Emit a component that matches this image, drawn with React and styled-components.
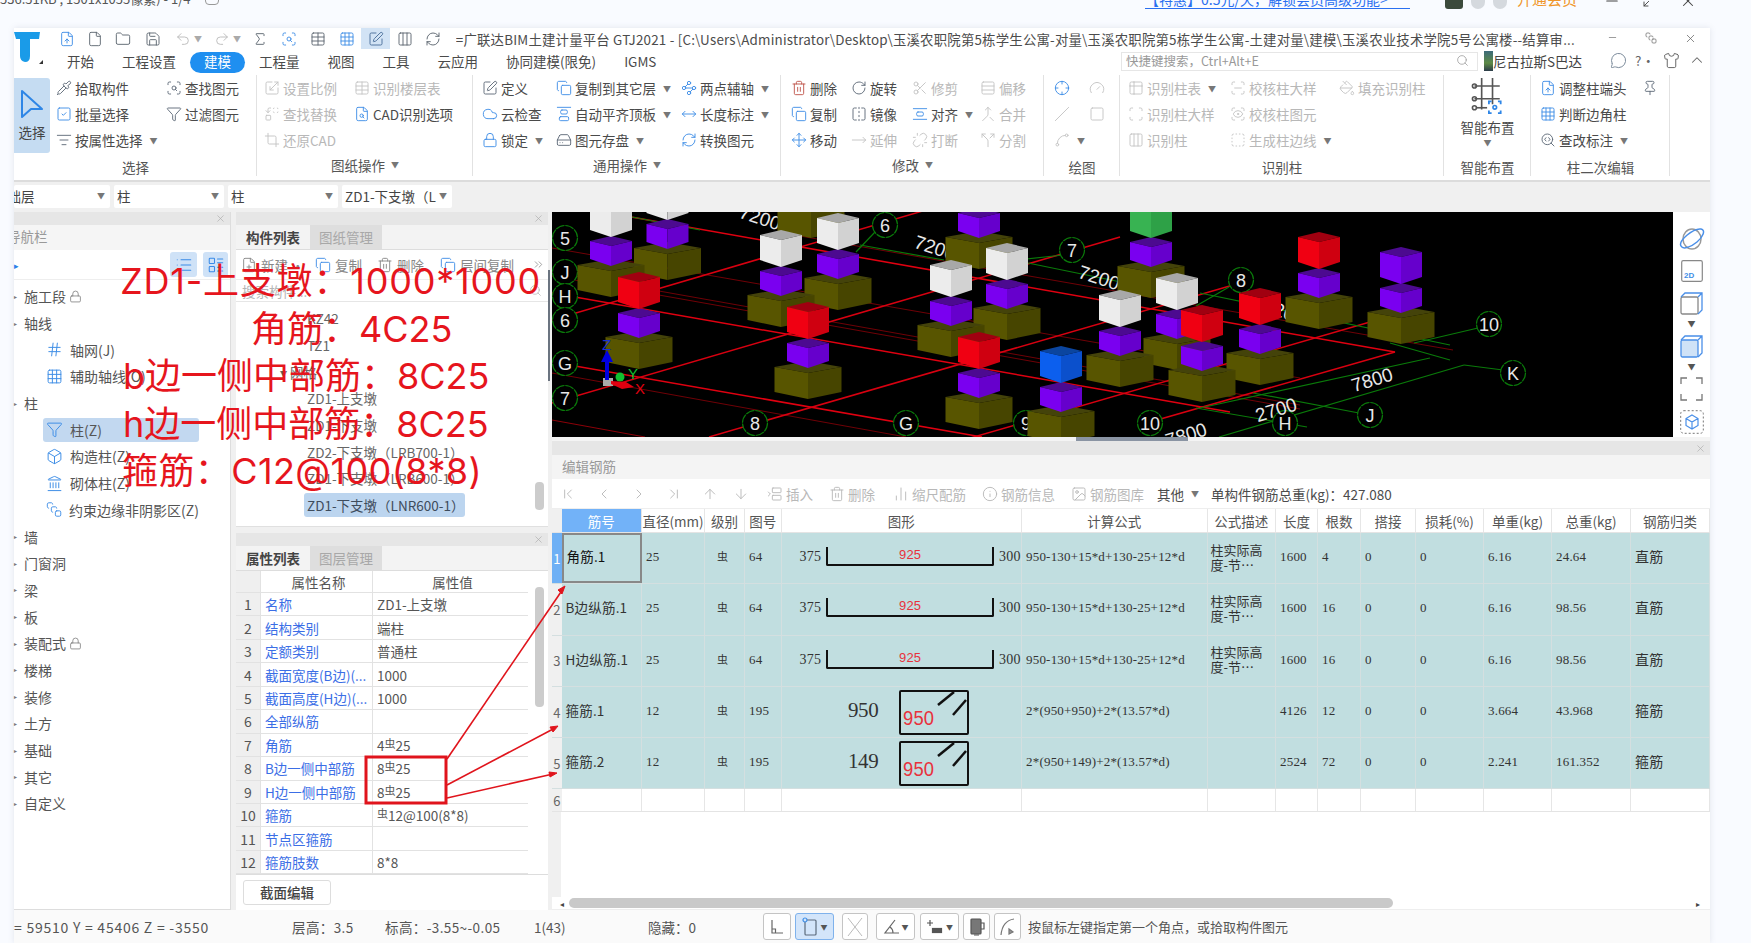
import React from 'react';
import styled, { createGlobalStyle } from 'styled-components';
import {
  Pipette, ScanSearch, SquareCheck, ListFilter, Filter, Scaling, Table, Replace, FileSearch, Crop, SquarePen, Copy,
  Waypoints, Cloud, AlignVerticalJustifyStart, MoveHorizontal, Lock, HardDrive, RefreshCw, Trash2, RotateCw, Scissors,
  Rows3, FlipHorizontal, AlignVerticalSpaceAround, Merge, Move, MoveRight, Unlink, Split, Crosshair, Gauge, Slash, Square,
  Spline, Table2, ScanLine, PaintBucket, Scan, ScanEye, Columns3, SquareDashed, SearchCode, Grid3x3, Hash, File, FileUp,
  Folder, Save, Undo2, Redo2, Sigma, Search, Minus, X, ChevronUp, List, LayoutList, FilePlus, ChevronsRight, ChevronFirst,
  ChevronLeft, ChevronRight, ChevronLast, ArrowUp, ArrowDown, Shirt, MessageCircle, Box, Info, ImageIcon, BetweenHorizontalStart,
  ChartNoAxesColumn, Pin, Landmark, SquareStack, Maximize2
} from 'lucide-react';

const CJK = `"Noto Sans CJK SC", "Noto Sans", sans-serif`;
const GlobalStyle = createGlobalStyle`
  html, body { margin: 0; padding: 0; background: #f9fbff; overflow: hidden; }
  body { font-family: ${CJK}; font-size: 13.5px; color: #4a4a4a; }
  * { box-sizing: border-box; }
`;

const Page = styled.div`width: 1751px; height: 943px; position: relative; overflow: hidden; display: flex; flex-direction: column;`;
const TopStrip = styled.div`height: 28px; flex: none; display: flex; align-items: flex-start; overflow: hidden; font-size: 13px; line-height: 16px; color: #555;`;
const StripFile = styled.div`margin-top: -9px; white-space: nowrap; width: 1145px; flex: none; display: flex; align-items: center;`;
const StripLink = styled.div`margin-top: -9px; width: 265px; flex: none; color: #2a6ff0; border-bottom: 1px solid #2a6ff0; height: 18px; white-space: nowrap; font-size: 14px;`;
const StripThumb = styled.div`width: 18px; height: 9px; flex: none; margin-left: 35px; background: #3c4a3c; border-radius: 0 0 3px 3px;`;
const StripDot = styled.div`width: 14px; height: 9px; flex: none; margin-left: 8px; background: #d5d9de; border-radius: 0 0 7px 7px;`;
const StripVip = styled.div`margin-top: -9px; margin-left: 10px; color: #f0962a; font-size: 15px; white-space: nowrap; width: 76px;`;
const StripCtl = styled.div`margin-top: -8px; width: 38px; flex: none; display: flex; justify-content: center; color: #444;`;
const Sep = styled.i`display: inline-block; width: 14px; height: 14px; border: 1px solid #999; border-radius: 4px; margin-left: 14px; margin-top: -3px;`;

const Win = styled.div`margin-left: 14px; width: 1696px; height: 915px; flex: none; background: #f0f0f0; display: flex; flex-direction: column; box-shadow: 0 0 6px rgba(120,130,150,.18);`;

const Head = styled.div`height: 45px; flex: none; background: #fff; display: flex;`;
const LogoCol = styled.div`width: 39px; flex: none;`;
const HeadMain = styled.div`flex: 1; display: flex; flex-direction: column; min-width: 0;`;
const TitleRow = styled.div`height: 24px; padding-bottom: 3px; display: flex; align-items: center;`;
const Quick = styled.div`width: ${p => p.$w || 28.8}px; height: 21px; flex: none; display: flex; align-items: center; justify-content: ${p => p.$left ? 'flex-start' : 'center'}; padding-left: ${p => p.$left || 0}px; background: ${p => p.$on ? '#d2e3f5' : 'transparent'}; color: ${p => p.$c || '#5d6670'};`;
const QCaret = styled.span`font-size: 8px; color: #aaa; margin-left: 3px;`;
const TitleText = styled.div`margin-left: 8px; width: 1127px; white-space: nowrap; overflow: hidden; font-size: 13.4px; letter-spacing: .2px; color: #4c4c4c;`;
const WinBtns = styled.div`display: flex; margin-left: 10px; color: #666;`;
const WinBtn = styled.div`width: 39px; display: flex; justify-content: center;`;
const TabRow = styled.div`height: 21px; display: flex; align-items: center;`;
const Tab = styled.div`height: 21px; line-height: 18px; padding: 0 14px; flex: none; white-space: nowrap; border-radius: 11px; background: ${p => p.$on ? '#1f8ff0' : 'transparent'}; color: ${p => p.$on ? '#fff' : '#4a4a4a'};`;
const SearchBox = styled.div`position: absolute; left: 1121px; top: 52px; width: 357px; height: 19px; border: 1px solid #e6e6e6; display: flex; align-items: center; justify-content: space-between; padding: 0 8px 2px 4px; color: #999; font-size: 12.5px; background: #fff;`;
const UserBlock = styled.div`position: absolute; left: 1484px; top: 50px; display: flex; align-items: center; height: 21px; color: #444; white-space: nowrap;`;
const Avatar = styled.div`width: 9px; height: 20px; background: linear-gradient(#3d6b7a, #5d8a45 60%, #2c3c4a);`;
const HeadIcons = styled.div`position: absolute; left: 1610px; top: 50px; display: flex; align-items: center; gap: 8px; color: #666;`;

const Ribbon = styled.div`height: 109px; flex: none; background: #fff; border-bottom: 2px solid #dcdcdc; display: flex;`;
const Group = styled.div`width: ${p => p.$w}px; flex: none; padding-left: ${p => p.$pad || 0}px; display: flex; flex-direction: column; position: relative; &::after { content: ''; position: absolute; right: 0; top: 2px; bottom: 4px; width: 1px; background: #e2e2e2; }`;
const Tools = styled.div`display: grid; grid-template-columns: ${p => p.$cols}; grid-template-rows: repeat(3, 26px); padding-top: 2px; height: 81px; flex: none;`;
const Label = styled.div`flex: 1; margin-left: ${p => -(p.$pad || 0)}px; display: flex; align-items: center; justify-content: center; padding-bottom: ${p => p.$up ? 5 : 0}px; color: #555; font-size: 13.5px; gap: 6px;`;
const Caret = styled.span`font-size: 8px; color: #777; margin-left: ${p => p.$ml ?? 4}px;`;
const Tool = styled.div`display: flex; align-items: center; gap: 3px; white-space: nowrap; color: ${p => p.$off ? '#b8b8b8' : '#4a4a4a'};`;
const SelectBtn = styled.div`grid-row: 1 / 4; width: 36px; height: 75px; margin-top: 3px; background: #c5dcf2; border-radius: 0 3px 3px 0; display: flex; flex-direction: column; align-items: center; justify-content: center; gap: 3px; color: #444; font-size: 13.5px;`;
const BigTool = styled.div`display: flex; flex-direction: column; align-items: center; padding-top: 4px; height: 81px; color: #4a4a4a; line-height: 20px;`;
const BigName = styled.span`margin-top: 2px;`;
const BigCaret = styled.span`font-size: 8px; color: #777; line-height: 10px; margin-top: 1px;`;

const Combos = styled.div`height: 28px; flex: none; display: flex; gap: 4px; padding-top: 3px;`;
const Combo = styled.div`width: ${p => p.$w}px; height: 23px; background: #fff; border-radius: 2px; display: flex; align-items: center; justify-content: space-between; padding: 0 5px 2px ${p => p.$cut ? 0 : 3}px; white-space: nowrap; overflow: hidden; color: #444;`;
const ComboCut = styled.span`margin-left: -20px;`;

const Main = styled.div`flex: 1; min-height: 0; display: flex; padding-top: 2px;`;
const LeftPanel = styled.div`width: 217px; flex: none; background: #fff; display: flex; flex-direction: column; border-right: 1px solid #ddd; border-bottom: 1px solid #ddd;`;
const GrayHead = styled.div`height: ${p => p.$h || 13}px; flex: none; background: #e6e6e6; display: flex; justify-content: flex-end; align-items: center; padding-right: 4px; color: #aaa;`;
const NavTitle = styled.div`height: 25px; flex: none; background: #f5f5f5; padding-bottom: 3px; display: flex; align-items: center; color: #999; overflow: hidden;`;
const NavText = styled.span`margin-left: -7px; white-space: nowrap;`;
const NavBar = styled.div`height: 30px; flex: none; display: flex; align-items: center; gap: 6px; justify-content: flex-end; padding-right: 2px; border-bottom: 1px solid #eee; position: relative;`;
const NavMark = styled.span`position: absolute; left: 0; top: 9px; color: #2a80e8; font-size: 9px;`;
const NavBtn = styled.div`width: ${p => p.$w}px; height: 25px; background: #cfe2f7; border-radius: 3px; display: flex; align-items: center; justify-content: center; color: #3a8be8;`;
const Tree = styled.div`padding-top: 3px; flex: 1;`;
const TreeRow = styled.div`height: 26.7px; display: flex; align-items: center; padding-left: ${p => p.$child ? 32 : 0}px; font-size: 14px; color: #555; position: relative;`;
const Twist = styled.span`width: 10px; flex: none; font-size: 6px; color: #777;`;
const TreeName = styled.span`white-space: nowrap; margin-left: ${p => p.$child ? 7 : 0}px;`;
const TreeHi = styled.div`display: flex; align-items: center; width: 156px; margin-left: -3px; padding-left: 3px; height: 24px; border-radius: 3px; background: ${p => p.$on ? '#c2d8f0' : 'transparent'};`;
const LockIcon = styled.span`margin-left: 3px; display: inline-flex; color: #777;`;

const Mid = styled.div`width: 312px; margin-left: 5px; flex: none; display: flex; flex-direction: column; gap: 6px;`;
const MidTop = styled.div`height: 315px; flex: none; background: #fff; display: flex; flex-direction: column; border-bottom: 1px solid #e0e0e0;`;
const MidBot = styled.div`flex: 1; background: #fff; display: flex; flex-direction: column;`;
const MidTabs = styled.div`height: 25px; flex: none; background: #f3f3f3; display: flex; border-bottom: 1px solid #ddd; padding-left: 1px;`;
const MidTab = styled.div`width: 72px; text-align: center; line-height: 24px; font-weight: ${p => p.$on ? 700 : 400}; color: ${p => p.$on ? '#444' : '#a8a8a8'}; background: ${p => p.$on ? '#f3f3f3' : '#dedede'}; margin-right: 1px;`;
const MidTools = styled.div`height: 29px; flex: none; display: flex; align-items: center; color: #888; position: relative; padding-left: 5px;`;
const MidTool = styled.div`display: flex; align-items: center; gap: 4px; width: ${p => p.$w}px; flex: none; white-space: nowrap; overflow: hidden;`;
const MidSearch = styled.div`height: 23px; flex: none; border-top: 1px solid #eee; border-bottom: 1px solid #e6e6e6; display: flex; align-items: center; justify-content: space-between; padding: 0 6px; color: #b5b5b5;`;
const MidList = styled.div`flex: 1; position: relative; display: flex; flex-direction: column; padding-top: 3px;`;
const ListRow = styled.div`height: 26.7px; flex: none; display: flex; align-items: center; padding-left: ${p => p.$ind || 71}px; color: #666; font-size: 13.5px; white-space: nowrap;`;
const ListSel = styled.span`background: #bcd5ef; border-radius: 3px; padding: 0 3px; margin-left: -3px; line-height: 24px; width: 161px; display: block; color: #3e4c5c;`;
const Thumb = styled.div`position: absolute; right: ${p => p.$r}px; top: ${p => p.$t}px; width: 9px; height: ${p => p.$h}px; background: #ccc; border-radius: 4px;`;

const PropWrap = styled.div`position: relative; flex: none; padding-right: 20px; border-bottom: 1px solid #ddd;`;
const PropRow = styled.div`display: grid; grid-template-columns: 25px 112px 1fr; height: ${p => p.$h || 23.45}px; border-bottom: 1px solid #e2e2e2;`;
const PropNum = styled.div`background: #efefef; border-right: 1px solid #e2e2e2; display: flex; align-items: center; justify-content: center; font-size: 14px; color: #555;`;
const PropName = styled.div`border-right: 1px solid #e2e2e2; padding-left: 4px; display: flex; align-items: center; white-space: nowrap; overflow: hidden; color: ${p => p.$head ? '#555' : '#3b6ee6'}; justify-content: ${p => p.$head ? 'center' : 'flex-start'};`;
const PropVal = styled.div`padding-left: 4px; display: flex; align-items: center; white-space: nowrap; color: #555; justify-content: ${p => p.$head ? 'center' : 'flex-start'};`;
const Sym = styled.span`font-size: 11px; position: relative; top: -2px;`;
const PropFoot = styled.div`flex: 1; padding: 5px 0 0 7px;`;
const EditBtn = styled.div`width: 88px; height: 25px; border: 1px solid #ddd; border-radius: 3px; text-align: center; line-height: 22px; color: #444; font-weight: 500;`;

const Gutter = styled.div`width: 4px; flex: none; padding-top: 58px;`;
const GutterMark = styled.div`width: 2px; height: 111px; background: #6b7480;`;

const Right = styled.div`flex: 1; min-width: 0; display: flex; flex-direction: column;`;
const ViewRow = styled.div`height: 225px; flex: none; display: flex;`;
const Canvas = styled.svg`width: 1121px; height: 225px; display: block; flex: none; background: #000;`;
const SideBar = styled.div`flex: 1; background: #fff; display: flex; flex-direction: column; align-items: center; padding-top: 14px;`;
const SideIcon = styled.div`height: ${p => p.$h}px; display: flex; align-items: center; justify-content: center; color: #4a8fe8; flex: none;`;
const SideArrow = styled.div`height: ${p => p.$h || 14}px; flex: none; font-size: 8px; line-height: ${p => p.$h || 14}px; color: #555;`;
const ScrollStrip = styled.div`height: 4px; flex: none; background: #f4f4f4; padding-left: 524px;`;
const ScrollGrip = styled.div`width: 112px; height: 4px; background: #8a94a3;`;

const Rebar = styled.div`flex: 1; min-height: 0; display: flex; flex-direction: column; background: #fff;`;
const RebarTitle = styled.div`height: 24px; flex: none; background: #f4f4f4; display: flex; align-items: center; padding: 0 0 3px 10px; color: #999; font-size: 13.5px;`;
const RebarTools = styled.div`height: 30px; flex: none; display: flex; align-items: center; color: #bbb; border-bottom: 1px solid #eee;`;
const RTool = styled.div`display: flex; align-items: center; gap: 3px; margin-left: ${p => p.$ml}px; color: ${p => p.$dark ? '#4c4c4c' : '#b8b8b8'}; white-space: nowrap; flex: none;`;
const Grid = styled.div`display: grid; grid-template-columns: 9.5px 80.5px 63px 40px 36.5px 240.5px 185.5px 68.5px 42px 43px 55px 68px 68px 79px 1fr; height: ${p => p.$h}px; flex: none; background: ${p => p.$bg || '#fff'}; border-bottom: 1px solid ${p => p.$line || '#e4e4e4'};`;
const HeadCell = styled.div`display: flex; align-items: center; justify-content: center; white-space: nowrap; border-right: 1px solid #e6e6e6; color: ${p => p.$on ? '#fff' : '#555'}; background: ${p => p.$on ? '#72b2f8' : 'transparent'}; overflow: hidden;`;
const Gut = styled.div`background: ${p => p.$on ? '#6eb0f5' : '#f0f0f0'}; color: ${p => p.$on ? '#fff' : '#666'}; display: flex; align-items: center; justify-content: center; font-size: 13px; overflow: visible; white-space: nowrap;`;
const Cell = styled.div`display: flex; align-items: center; border-right: 1px solid #d4dfe0; padding: 0 0 3px ${p => p.$pad ?? 4}px; font-family: "Liberation Serif", "Noto Sans CJK SC", serif; font-size: 13px; color: #333; white-space: nowrap; overflow: hidden; line-height: 15px; letter-spacing: .2px; position: relative; ${p => p.$sel && 'border: 2px solid #888; font-size: 14px; color: #111; padding-left: 3px;'}`;
const CellWrap = styled(Cell)`white-space: normal; font-family: ${CJK}; font-size: 13px; letter-spacing: 0; padding-left: 3px; width: 100%; color: #333;`;
const Cjk = styled.span`font-family: ${CJK}; font-size: ${p => p.$s || 13.5}px;`;

const BarShape = styled.div`flex: 1; display: flex; align-items: center; font-family: "Liberation Serif", "Noto Sans CJK SC", serif; padding-left: 18px; font-size: 14px; color: #333;`;
const BarLine = styled.div`width: 168px; height: 19px; margin: 0 5px 0 5px; border: solid #111; border-width: 0 2px 2px 2px; border-radius: 0 0 2px 2px; text-align: center; color: #e8323c; line-height: 16px; font-family: "Liberation Sans", sans-serif; font-size: 13px;`;
const HookLabel = styled.div`width: 117px; flex: none; padding-right: 20px; text-align: right; font-size: 21px; font-family: "Liberation Serif", serif; color: #333; letter-spacing: -.3px;`;
const HookBox = styled.div`width: 70px; height: 45px; border: 2.5px solid #111; border-radius: 2px; position: relative; flex: none; margin-top: 3px;`;
const HookText = styled.span`position: absolute; left: 2px; top: 15px; color: #e8323c; font-family: "Liberation Sans", sans-serif; font-size: 20px; line-height: 22px; transform: scaleX(.92); transform-origin: left;`;
const HookSvg = styled.svg`position: absolute; left: 30px; top: -1px; width: 36px; height: 26px;`;

const Filler = styled.div`flex: 1; border-left: 9.5px solid #f0f0f0;`;
const HScroll = styled.div`height: 13px; flex: none; display: flex; align-items: center; padding: 0 8px; gap: 5px; color: #444; border-bottom: 1px solid #eee;`;
const HThumb = styled.div`width: 824px; height: 10px; background: #c9c9c9; border-radius: 5px; flex: none;`;
const HArrow = styled.span`font-size: 8px; margin-left: ${p => p.$ml || 0}px;`;

const Status = styled.div`height: 33px; flex: none; background: #fafafa; display: flex; align-items: center; font-size: 14px; color: #555; white-space: nowrap;`;
const StatusText = styled.span`width: ${p => p.$w}px; flex: none; font-size: ${p => p.$s || 13.5}px; letter-spacing: ${p => p.$ls || 0}px;`;
const SBtn = styled.div`width: ${p => p.$w}px; height: 27px; margin-right: ${p => p.$mr ?? 4}px; border: 1px solid ${p => p.$on ? '#7fb2ec' : '#c4c4c4'}; background: ${p => p.$on ? '#d3e5fa' : '#fff'}; border-radius: 3px; display: flex; align-items: center; justify-content: center; flex: none; gap: 2px;`;
const SCaret = styled.span`font-size: 7px; color: #555;`;

const Overlay = styled.svg`position: absolute; left: 0; top: 0; width: 1751px; height: 943px; pointer-events: none;`;
const RedNote = styled.div`position: absolute; left: 120px; top: 258px; color: #e6151d; font-size: 36px; line-height: 47.5px; white-space: nowrap; pointer-events: none; font-family: Inter, ${CJK};`;
const NoteLine = styled.div`padding-left: ${p => p.$ind || 0}px; letter-spacing: ${p => p.$ls || 0}px;`;

const I = (C, p = {}) => <C size={p.s || 16} strokeWidth={p.w || 1.4} color={p.c || 'currentColor'} />;
const BLUE = '#3f8ee6';

const Logo = () => (
  <svg width="39" height="38" viewBox="0 0 39 38">
    <path d="M0 4 H26 L25 11 H16 V28 Q16 34 11 34 Q6 33 6 28 V11 H2 Z" fill="#1a9be8" />
    <path d="M25 36 l4 -4 v4 z" fill="#333" />
  </svg>
);

const ToolItem = ({ icon, label, off, caret, c }) => (
  <Tool $off={!!off}>
    {I(icon, { c: off ? '#c4c4c4' : c || '#5f6b78' })}
    {label ? <span>{label}</span> : null}
    {caret ? <Caret>▼</Caret> : null}
  </Tool>
);

const ribbon = [
  { w: 243, cols: '42px 110px 1fr', label: '选择', sel: true, items: [
    [Pipette, '拾取构件'], [ScanSearch, '查找图元'], [SquareCheck, '批量选择', 0, 0, BLUE], [Filter, '过滤图元'], [ListFilter, '按属性选择', 0, 1]] },
  { w: 216, pad: 7, cols: '90px 1fr', label: '图纸操作', labelCaret: true, items: [
    [Scaling, '设置比例', 1], [Table, '识别楼层表', 1], [Replace, '查找替换', 1], [FileSearch, 'CAD识别选项', 0, 0, BLUE], [Crop, '还原CAD', 1]] },
  { w: 308, pad: 9, cols: '74px 125px 1fr', label: '通用操作', labelCaret: true, items: [
    [SquarePen, '定义'], [Copy, '复制到其它层', 0, 1, BLUE], [Waypoints, '两点辅轴', 0, 1, BLUE],
    [Cloud, '云检查', 0, 0, BLUE], [AlignVerticalJustifyStart, '自动平齐顶板', 0, 1, BLUE], [MoveHorizontal, '长度标注', 0, 1, BLUE],
    [Lock, '锁定', 0, 1, BLUE], [HardDrive, '图元存盘', 0, 1], [RefreshCw, '转换图元', 0, 0, BLUE]] },
  { w: 263, pad: 10, cols: '60px 61px 68px 1fr', label: '修改', labelCaret: true, items: [
    [Trash2, '删除', 0, 0, '#c0564c'], [RotateCw, '旋转'], [Scissors, '修剪', 1], [Rows3, '偏移', 1],
    [Copy, '复制', 0, 0, BLUE], [FlipHorizontal, '镜像'], [AlignVerticalSpaceAround, '对齐', 0, 1, BLUE], [Merge, '合并', 1],
    [Move, '移动', 0, 0, BLUE], [MoveRight, '延伸', 1], [Unlink, '打断', 1], [Split, '分割', 1]] },
  { w: 76, pad: 10, cols: '35px 1fr', label: '绘图', items: [
    [Crosshair, '', 0, 0, BLUE], [Gauge, '', 1], [Slash, '', 1], [Square, '', 1], [Spline, '', 1, 1]] },
  { w: 324, pad: 8, cols: '102px 109px 1fr', label: '识别柱', items: [
    [Table2, '识别柱表', 1, 1], [ScanLine, '校核柱大样', 1], [PaintBucket, '填充识别柱', 1],
    [Scan, '识别柱大样', 1], [ScanEye, '校核柱图元', 1], null,
    [Columns3, '识别柱', 1], [SquareDashed, '生成柱边线', 1, 1]] },
  { w: 87, label: '智能布置', big: true },
  { w: 139, pad: 9, cols: '102px 1fr', label: '柱二次编辑', items: [
    [FileUp, '调整柱端头', 0, 0, BLUE], [Pin, ''], [Grid3x3, '判断边角柱', 0, 0, BLUE], null, [SearchCode, '查改标注', 0, 1]] },
];

const treeData = [
  { t: '施工段', lock: 1 }, { t: '轴线' }, { t: '轴网(J)', c: 1, i: Hash }, { t: '辅助轴线(O)', c: 1, i: Grid3x3 }, { t: '柱' },
  { t: '柱(Z)', c: 1, i: Filter, on: 1 }, { t: '构造柱(Z)', c: 1, i: Box }, { t: '砌体柱(Z)', c: 1, i: Landmark },
  { t: '约束边缘非阴影区(Z)', c: 1, i: SquareStack }, { t: '墙' }, { t: '门窗洞' }, { t: '梁' }, { t: '板' },
  { t: '装配式', lock: 1 }, { t: '楼梯' }, { t: '装修' }, { t: '土方' }, { t: '基础' }, { t: '其它' }, { t: '自定义' },
];

const props = [
  ['名称', 'ZD1-上支墩'], ['结构类别', '端柱'], ['定额类别', '普通柱'], ['截面宽度(B边)(...', '1000'], ['截面高度(H边)(...', '1000'],
  ['全部纵筋', ''], ['角筋', <>4<Sym>虫</Sym>25</>], ['B边一侧中部筋', <>8<Sym>虫</Sym>25</>], ['H边一侧中部筋', <>8<Sym>虫</Sym>25</>],
  ['箍筋', <><Sym>虫</Sym>12@100(8*8)</>], ['节点区箍筋', ''], ['箍筋肢数', '8*8'],
];

const rebarRows = [
  { name: '角筋.1', d: 25, no: 64, kind: 'bar', f: '950-130+15*d+130-25+12*d', desc: '柱实际高度-节…', len: 1600, n: 4, w: '6.16', tot: '24.64', cat: '直筋', sel: 1 },
  { name: 'B边纵筋.1', d: 25, no: 64, kind: 'bar', f: '950-130+15*d+130-25+12*d', desc: '柱实际高度-节…', len: 1600, n: 16, w: '6.16', tot: '98.56', cat: '直筋' },
  { name: 'H边纵筋.1', d: 25, no: 64, kind: 'bar', f: '950-130+15*d+130-25+12*d', desc: '柱实际高度-节…', len: 1600, n: 16, w: '6.16', tot: '98.56', cat: '直筋' },
  { name: '箍筋.1', d: 12, no: 195, kind: 'hook', a: 950, f: '2*(950+950)+2*(13.57*d)', desc: '', len: 4126, n: 12, w: '3.664', tot: '43.968', cat: '箍筋' },
  { name: '箍筋.2', d: 12, no: 195, kind: 'hook', a: 149, f: '2*(950+149)+2*(13.57*d)', desc: '', len: 2524, n: 72, w: '2.241', tot: '161.352', cat: '箍筋' },
];

const heads = ['筋号', '直径(mm)', '级别', '图号', '图形', '计算公式', '公式描述', '长度', '根数', '搭接', '损耗(%)', '单重(kg)', '总重(kg)', '钢筋归类'];

/* ---------- 3D canvas ---------- */
const PAL = {
  white: ['#a8a8a8', '#ececec', '#d2d2d2'],
  red: ['#a00010', '#f00012', '#cf0010'],
  purple: ['#4c0a90', '#7a00f0', '#6600cc'],
  olive: ['#44430a', '#585500', '#474500'],
  blue: ['#0b459f', '#0c5fee', '#0b50cc'],
  green: ['#1d8a39', '#38b352', '#2ea147'],
};
const Cube = ({ cx, y, w, h, dh, col }) => {
  const [t, l, r] = PAL[col];
  const hw = w / 2, s = dh, f = dh * 2;
  return (
    <g>
      <polygon points={`${cx},${y} ${cx + hw},${y + s} ${cx},${y + f} ${cx - hw},${y + s}`} fill={t} />
      <polygon points={`${cx - hw},${y + s} ${cx},${y + f} ${cx},${y + h} ${cx - hw},${y + h - 7}`} fill={l} />
      <polygon points={`${cx + hw},${y + s} ${cx},${y + f} ${cx},${y + h} ${cx + hw},${y + h - 7}`} fill={r} />
    </g>
  );
};
const Pier = ({ cx, y, col }) => (
  <g>
    <Cube cx={cx} y={y + 59} w={67} h={38} dh={6} col="olive" />
    <Cube cx={cx} y={y + 36} w={42} h={30} dh={5} col="purple" />
    {col !== 'none' && <Cube cx={cx} y={y} w={42} h={37} dh={5} col={col} />}
  </g>
);
const piers = [
  [811, 141, 'none'], [979, 172, 'purple'], [667.5, 183, 'white'], [611, 200, 'white'], [1151, 201, 'green'], [838, 213, 'white'], [781, 230, 'white'],
  [1319, 232, 'red'], [1007, 243, 'white'], [1401, 247, 'purple'], [951, 260, 'white'], [639, 272, 'red'],
  [1177, 273, 'white'], [1260, 288, 'red'], [1120, 290, 'white'], [808, 302, 'red'], [1202, 305, 'red'], [979, 332, 'red'], [1061, 346, 'blue'],
];
const redA = [[552, 362, 982, 437, 1.5], [552, 293, 1230, 412, 1.5], [552, 203, 1395, 352, 1.5], [552, 248, 1300, 378, .8], [800, 236, 1453, 350, .8], [552, 373, 906, 437, .8],
  [552, 272, 1300, 405, .8], [552, 276, 1300, 409, .8], [552, 420, 645, 437, 1]];
const redB = [[552, 403, 1120, 237, 1.5], [552, 320, 960, 200, 1.5], [709, 437, 1240, 283, 1.5], [960, 441, 1370, 322, 1.5], [1150, 422, 1395, 352, 1.5]];
const greens = [[860, 245, 944, 260], [1028, 263, 1150, 288], [1200, 293, 1450, 345], [1464, 365, 1503, 370], [1219, 437, 1464, 365], [1200, 408, 1430, 358],
  [1253, 393, 1359, 413], [1414, 343, 1478, 328], [1196, 408, 1307, 427], [1000, 262, 1063, 255], [1196, 306, 1229, 287], [856, 252, 875, 232], [1390, 343, 1450, 360], [632, 217, 700, 230]];
const labels = [['5', 565, 238], ['J', 565, 272], ['H', 565, 296], ['6', 565, 320], ['G', 565, 363], ['7', 565, 398], ['8', 755, 423], ['G', 906, 423], ['9', 1026, 423],
  ['10', 1150, 423], ['6', 885, 225], ['7', 1072, 250], ['8', 1241, 280], ['10', 1489, 324], ['K', 1513, 373], ['J', 1370, 415], ['H', 1285, 423]];
const dims = [['7200', 758, 224, 18], ['7200', 933, 254, 18], ['7200', 1097, 284, 18], ['7200', 1282, 318, 18], ['7800', 1374, 386, -17], ['2700', 1278, 416, -17], ['7800', 1188, 441, -17]];

const View = () => (
  <Canvas viewBox="552 212 1121 225">
    {redA.map(([a, b, c, d, w], i) => <line key={i} x1={a} y1={b} x2={c} y2={d} stroke={w > 1 ? '#e00010' : '#8c0008'} strokeWidth={w} />)}
    {redB.map(([a, b, c, d, w], i) => <line key={i} x1={a} y1={b} x2={c} y2={d} stroke="#d80010" strokeWidth={w} />)}
    {greens.map(([a, b, c, d], i) => <line key={i} x1={a} y1={b} x2={c} y2={d} stroke="#0a7a0a" strokeWidth="1.2" />)}
    {labels.map(([t, x, y], i) => (
      <g key={i}>
        <circle cx={x} cy={y} r={12.5} fill="#000" stroke="#0a7a0a" strokeWidth="1.2" strokeDasharray="9 .8" />
        <text x={x} y={y + 6.5} textAnchor="middle" fill="#e8e8e8" fontSize="18" fontFamily="Liberation Sans, sans-serif">{t}</text>
      </g>
    ))}
    {dims.map(([t, x, y, r], i) => (
      <text key={i} x={x} y={y} textAnchor="middle" fill="#e8e8e8" fontSize="19" fontFamily="Liberation Sans, sans-serif" transform={`rotate(${r} ${x} ${y})`}>{t}</text>
    ))}
    {piers.map(([cx, y, col], i) => <Pier key={i} cx={cx} y={y} col={col} />)}
    <rect x="603" y="378" width="10" height="8" fill="#aaa" />
    <rect x="605" y="360" width="4" height="20" fill="#0000e0" />
    <polygon points="601,362 607,350 613,362" fill="#0000e0" />
    <text x="602" y="350" fontSize="15" fill="#1a30d0" fontFamily="Liberation Sans, sans-serif">Z</text>
    <circle cx="620" cy="377" r="4.5" fill="#10c030" />
    <text x="628" y="379" fontSize="15" fill="#10c030" fontFamily="Liberation Sans, sans-serif">Y</text>
    <polygon points="611,381 626,382 634,387 622,389 611,384" fill="#e00010" />
    <text x="635" y="394" fontSize="15" fill="#e00010" fontFamily="Liberation Sans, sans-serif">X</text>
  </Canvas>
);

const SmartIcon = () => (
  <svg width="36" height="38" viewBox="0 0 38 42" fill="none" stroke="#555" strokeWidth="1.8">
    <path d="M4 10 H32 M4 24 H32 M12 1 V36 M24 1 V30" />
    <circle cx="4" cy="10" r="2.2" /><circle cx="4" cy="24" r="2.2" /><circle cx="4" cy="34" r="2.2" />
    <path d="M6 34 H18" />
    <path d="M20 30 v-3 h3 M30 27 h3 v3 M33 37 v3 h-3 M23 40 h-3 v-3" stroke="#2f86e6" strokeWidth="2" />
    <circle cx="26.5" cy="33.5" r="2" stroke="#2f86e6" />
  </svg>
);
const SelectIcon = () => (
  <svg width="26" height="30" viewBox="0 0 26 30" fill="none" stroke="#2f86e6" strokeWidth="2" strokeLinejoin="round">
    <path d="M3 2 L23 20 L12 20 L3 28 Z" />
  </svg>
);

const OrbitIcon = () => (
  <svg width="26" height="24" viewBox="0 0 26 24" fill="none" strokeWidth="1.5">
    <ellipse cx="13" cy="12" rx="9" ry="10" stroke="#999" />
    <path d="M2 19 C-1 14 14 1 22 2 C27 3 24 10 18 15 C12 20 4 23 2 19Z" stroke="#4a8fe8" />
  </svg>
);
const TwoD = () => (
  <svg width="22" height="22" viewBox="0 0 22 22" fill="none">
    <rect x=".7" y=".7" width="20.6" height="20.6" rx="1.5" stroke="#888" strokeWidth="1.2" />
    <text x="3" y="18" fontSize="8" fontWeight="700" fill="#3f8ee6" fontFamily="Liberation Sans, sans-serif">2D</text>
  </svg>
);
const CubeIcon = ({ fill }) => (
  <svg width="23" height="23" viewBox="0 0 23 23" fill="none" strokeWidth="1.3">
    <rect x="1" y="5" width="17" height="17" rx="1.5" stroke={fill ? '#4a8fe8' : '#888'} fill={fill ? '#cfe2f7' : 'none'} />
    <path d="M1 5 L5 1 H22 V18 L18 22 M18 5 L22 1" stroke="#4a8fe8" />
  </svg>
);
const Corners = () => (
  <svg width="23" height="24" viewBox="0 0 23 24" fill="none" stroke="#777" strokeWidth="1.3">
    <path d="M1 7 V1 H7 M16 1 H22 V7 M22 17 V23 H16 M7 23 H1 V17" />
  </svg>
);
const DashCube = () => (
  <svg width="24" height="24" viewBox="0 0 24 24" fill="none">
    <rect x=".7" y=".7" width="22.6" height="22.6" rx="3" stroke="#777" strokeDasharray="2 2" />
    <path d="M12 5 L18 8.5 V15.5 L12 19 L6 15.5 V8.5 Z M6 8.5 L12 12 L18 8.5 M12 12 V19" stroke="#4a8fe8" strokeWidth="1.2" />
  </svg>
);

const OrthoIcon = () => (
  <svg width="16" height="18" viewBox="0 0 16 18" fill="none" stroke="#666" strokeWidth="1.2"><path d="M3 2 V15 H14 M3 11 H6.5 V15" /></svg>
);
const RectSnapIcon = () => (
  <svg width="17" height="20" viewBox="0 0 17 20" fill="none" strokeWidth="1.2"><rect x="3" y="3" width="11" height="15" rx="1" stroke="#5c6b7c" /><circle cx="3" cy="3" r="2" stroke="#3f8ee6" fill="#d3e5fa" /></svg>
);
const CrossIcon = () => (
  <svg width="18" height="22" viewBox="0 0 18 22" fill="none" stroke="#bbb" strokeWidth="1"><path d="M2 2 L16 20 M16 2 L2 20" /></svg>
);
const AngleIcon = () => (
  <svg width="17" height="16" viewBox="0 0 17 16" fill="none" stroke="#666" strokeWidth="1.2"><path d="M12 1 L2 14 H16 M7 8 Q10 10 10 14" /></svg>
);
const PlusBar = () => (
  <svg width="18" height="16" viewBox="0 0 18 16" fill="none" stroke="#555" strokeWidth="1.2"><path d="M4 1 V7 M1 4 H7" /><rect x="6.5" y="9.5" width="9" height="4" fill="#555" /></svg>
);
const ScreenIcon = () => (
  <svg width="16" height="20" viewBox="0 0 16 20" fill="none" stroke="#555" strokeWidth="1.2"><rect x="2" y="2" width="10" height="15" rx="1" fill="#777" /><path d="M12 6 h3 v6 h-3 M5 18 h5" /></svg>
);
const ArcIcon = () => (
  <svg width="17" height="20" viewBox="0 0 17 20" fill="none" stroke="#777" strokeWidth="1.2"><path d="M2 18 C3 8 8 3 15 2" /><path d="M10 12 l4 3 -4 2 z" fill="#999" /></svg>
);

const HookMark = () => (
  <HookSvg viewBox="0 0 36 26" fill="none" stroke="#111" strokeWidth="2.5">
    <line x1="7" y1="14" x2="23" y2="1" />
    <line x1="22" y1="24" x2="35" y2="9" />
  </HookSvg>
);

const Overlays = () => (
  <Overlay viewBox="0 0 1751 943" fill="none" stroke="#e0141c">
    <rect x="366" y="757" width="80" height="46" strokeWidth="3" />
    <line x1="447" y1="759" x2="563" y2="589" strokeWidth="1.6" />
    <polygon points="565,586 558,590 562,594" fill="#e0141c" />
    <line x1="447" y1="785" x2="555" y2="728" strokeWidth="1.6" />
    <polygon points="558,726 550,727 553,732" fill="#e0141c" />
    <line x1="447" y1="798" x2="553" y2="774" strokeWidth="1.6" />
    <polygon points="557,773 549,772 550,777" fill="#e0141c" />
  </Overlay>
);

export default function App() {
  return (
    <Page>
      <GlobalStyle />
      <TopStrip>
        <StripFile>536.51KB , 1501x1055像素) - 1/4<Sep /></StripFile>
        <StripLink>【特惠】0.5元/天，解锁会员高级功能&gt;</StripLink>
        <StripThumb /><StripDot /><StripDot />
        <StripVip>开通会员</StripVip>
        <StripCtl>{I(Minus, { s: 18 })}</StripCtl>
        <StripCtl>{I(Maximize2, { s: 16 })}</StripCtl>
        <StripCtl>{I(X, { s: 18 })}</StripCtl>
      </TopStrip>
      <Win>
        <Head>
          <LogoCol><Logo /></LogoCol>
          <HeadMain>
            <TitleRow>
              <Quick $w={28} $c={BLUE}>{I(FileUp)}</Quick>
              <Quick $w={28}>{I(File)}</Quick>
              <Quick $w={28}>{I(Folder)}</Quick>
              <Quick $w={32}>{I(Save)}</Quick>
              <Quick $w={36} $left={6} $c="#bbb">{I(Undo2)}<QCaret>▼</QCaret></Quick>
              <Quick $w={40} $left={9} $c="#bbb">{I(Redo2)}<QCaret>▼</QCaret></Quick>
              <Quick $w={30}>{I(Sigma)}</Quick>
              <Quick $c={BLUE}>{I(ScanSearch)}</Quick>
              <Quick>{I(Table)}</Quick>
              <Quick $c={BLUE}>{I(Grid3x3)}</Quick>
              <Quick $on $c="#4a6f9a">{I(SquarePen)}</Quick>
              <Quick>{I(Columns3)}</Quick>
              <Quick>{I(RefreshCw)}</Quick>
              <TitleText>=广联达BIM土建计量平台 GTJ2021 - [C:\Users\Administrator\Desktop\玉溪农职院第5栋学生公寓-对量\玉溪农职院第5栋学生公寓-土建对量\建模\玉溪农业技术学院5号公寓楼--结算审...</TitleText>
              <WinBtns>
                <WinBtn>{I(Minus, { s: 11 })}</WinBtn>
                <WinBtn>{I(SquareStack, { s: 12 })}</WinBtn>
                <WinBtn>{I(X, { s: 13 })}</WinBtn>
              </WinBtns>
            </TitleRow>
            <TabRow>
              {['开始', '工程设置', '建模', '工程量', '视图', '工具', '云应用', '协同建模(限免)', 'IGMS'].map(t => (
                <Tab key={t} $on={t === '建模'}>{t}</Tab>
              ))}
            </TabRow>
          </HeadMain>
        </Head>
        <SearchBox>快捷键搜索，Ctrl+Alt+E {I(Search, { s: 13 })}</SearchBox>
        <UserBlock><Avatar />尼古拉斯S巴达</UserBlock>
        <HeadIcons>
          {I(MessageCircle, { s: 17, c: '#7a8a9a' })}
          <span>?·</span>
          {I(Shirt, { s: 17 })}
          {I(ChevronUp, { s: 18 })}
        </HeadIcons>

        <Ribbon>
          {ribbon.map(g => (
            <Group key={g.label} $w={g.w} $pad={g.pad}>
              {g.big ? (
                <BigTool><SmartIcon /><BigName>智能布置</BigName><BigCaret>▼</BigCaret></BigTool>
              ) : (
                <Tools $cols={g.cols}>
                  {g.sel && <SelectBtn><SelectIcon />选择</SelectBtn>}
                  {g.items.map((it, i) => it
                    ? <ToolItem key={i} icon={it[0]} label={it[1]} off={it[2]} caret={it[3]} c={it[4]} />
                    : <span key={i} />)}
                </Tools>
              )}
              <Label $pad={g.pad} $up={g.labelCaret}>{g.label}{g.labelCaret && <Caret $ml={0}>▼</Caret>}</Label>
            </Group>
          ))}
        </Ribbon>

        <Combos>
          <Combo $w={96} $cut><ComboCut>基础层</ComboCut><Caret>▼</Caret></Combo>
          <Combo $w={110}>柱<Caret>▼</Caret></Combo>
          <Combo $w={110}>柱<Caret>▼</Caret></Combo>
          <Combo $w={110}>ZD1-下支墩（L<Caret $ml={0}>▼</Caret></Combo>
        </Combos>

        <Main>
          <LeftPanel>
            <GrayHead>{I(X, { s: 11 })}</GrayHead>
            <NavTitle><NavText>导航栏</NavText></NavTitle>
            <NavBar>
              <NavMark>▸</NavMark>
              <NavBtn $w={27}>{I(List, { s: 18 })}</NavBtn>
              <NavBtn $w={25}>{I(LayoutList, { s: 18 })}</NavBtn>
            </NavBar>
            <Tree>
              {treeData.map(n => (
                <TreeRow key={n.t} $child={n.c}>
                  {n.c ? (
                    <TreeHi $on={n.on}>
                      {I(n.i, { s: 17, c: BLUE })}
                      <TreeName $child>{n.t}</TreeName>
                    </TreeHi>
                  ) : (
                    <>
                      <Twist>▸</Twist>
                      <TreeName>{n.t}</TreeName>
                      {n.lock && <LockIcon>{I(Lock, { s: 13 })}</LockIcon>}
                    </>
                  )}
                </TreeRow>
              ))}
            </Tree>
          </LeftPanel>

          <Mid>
            <MidTop>
              <GrayHead>{I(X, { s: 11 })}</GrayHead>
              <MidTabs><MidTab $on>构件列表</MidTab><MidTab>图纸管理</MidTab></MidTabs>
              <MidTools>
                <MidTool $w={74}>{I(FilePlus)}新建 ·</MidTool>
                <MidTool $w={62}>{I(Copy, { c: BLUE })}复制</MidTool>
                <MidTool $w={63}>{I(Trash2)}删除</MidTool>
                <MidTool $w={92}>{I(Copy, { c: BLUE })}层间复制</MidTool>
                {I(ChevronsRight, { s: 13 })}
              </MidTools>
              <MidSearch>搜索构件...{I(Search, { s: 13 })}</MidSearch>
              <MidList>
                <ListRow>KZ42</ListRow>
                <ListRow>TZ1</ListRow>
                <ListRow $ind={44}>▾ 网格</ListRow>
                <ListRow>ZD1-上支墩</ListRow>
                <ListRow>ZD1-下支墩</ListRow>
                <ListRow>ZD2-下支墩（LRB700-1）</ListRow>
                <ListRow>ZD1-下支墩（LRB600-1）</ListRow>
                <ListRow><ListSel>ZD1-下支墩（LNR600-1）</ListSel></ListRow>
                <Thumb $r={4} $t={180} $h={28} />
              </MidList>
            </MidTop>
            <MidBot>
              <GrayHead>{I(X, { s: 11 })}</GrayHead>
              <MidTabs><MidTab $on>属性列表</MidTab><MidTab>图层管理</MidTab></MidTabs>
              <PropWrap>
                <PropRow $h={22}><PropNum /><PropName $head>属性名称</PropName><PropVal $head>属性值</PropVal></PropRow>
                {props.map(([n, v], i) => (
                  <PropRow key={n}><PropNum>{i + 1}</PropNum><PropName>{n}</PropName><PropVal>{v}</PropVal></PropRow>
                ))}
                <Thumb $r={4} $t={16} $h={120} />
              </PropWrap>
              <PropFoot><EditBtn>截面编辑</EditBtn></PropFoot>
            </MidBot>
          </Mid>

          <Gutter><GutterMark /></Gutter>

          <Right>
            <ViewRow>
              <View />
              <SideBar>
                <SideIcon $h={26}><OrbitIcon /></SideIcon>
                <SideIcon $h={38}><TwoD /></SideIcon>
                <SideIcon $h={26}><CubeIcon /></SideIcon>
                <SideArrow $h={16}>▼</SideArrow>
                <SideIcon $h={28}><CubeIcon fill /></SideIcon>
                <SideArrow>▼</SideArrow>
                <SideIcon $h={30}><Corners /></SideIcon>
                <SideIcon $h={36}><DashCube /></SideIcon>
              </SideBar>
            </ViewRow>
            <ScrollStrip><ScrollGrip /></ScrollStrip>
            <Rebar>
              <GrayHead $h={14}>{I(X, { s: 11 })}</GrayHead>
              <RebarTitle>编辑钢筋</RebarTitle>
              <RebarTools>
                <RTool $ml={8}>{I(ChevronFirst)}</RTool>
                <RTool $ml={20}>{I(ChevronLeft)}</RTool>
                <RTool $ml={19}>{I(ChevronRight)}</RTool>
                <RTool $ml={19}>{I(ChevronLast)}</RTool>
                <RTool $ml={20}>{I(ArrowUp)}</RTool>
                <RTool $ml={15}>{I(ArrowDown)}</RTool>
                <RTool $ml={18}>{I(BetweenHorizontalStart)}插入</RTool>
                <RTool $ml={16}>{I(Trash2)}删除</RTool>
                <RTool $ml={18}>{I(ChartNoAxesColumn)}缩尺配筋</RTool>
                <RTool $ml={16}>{I(Info)}钢筋信息</RTool>
                <RTool $ml={16}>{I(ImageIcon)}钢筋图库</RTool>
                <RTool $ml={13} $dark>其他<Caret $ml={4}>▼</Caret></RTool>
                <RTool $ml={12} $dark>单构件钢筋总重(kg)：427.080</RTool>
              </RebarTools>
              <Grid $h={24}>
                <Gut />
                {heads.map((h, i) => <HeadCell key={h} $on={i === 0}>{h}</HeadCell>)}
              </Grid>
              {rebarRows.map((r, i) => (
                <Grid key={i} $h={51.3} $bg="#c1dee0" $line="#d4dfe0">
                  <Gut $on={r.sel}>{i + 1}</Gut>
                  <Cell $sel={r.sel}><Cjk>{r.name}</Cjk></Cell>
                  <Cell>{r.d}</Cell>
                  <Cell $pad={12}><Cjk $s={11}>虫</Cjk></Cell>
                  <Cell>{r.no}</Cell>
                  <Cell $pad={0}>
                    {r.kind === 'bar' ? (
                      <BarShape>375<BarLine>925</BarLine>300</BarShape>
                    ) : (
                      <><HookLabel>{r.a}</HookLabel><HookBox><HookText>950</HookText><HookMark /></HookBox></>
                    )}
                  </Cell>
                  <Cell>{r.f}</Cell>
                  {r.desc ? <CellWrap>{r.desc}</CellWrap> : <Cell />}
                  <Cell>{r.len}</Cell>
                  <Cell>{r.n}</Cell>
                  <Cell>0</Cell>
                  <Cell>0</Cell>
                  <Cell>{r.w}</Cell>
                  <Cell>{r.tot}</Cell>
                  <Cell $pad={4}><Cjk $s={14}>{r.cat}</Cjk></Cell>
                </Grid>
              ))}
              <Grid $h={23}>
                <Gut>6</Gut>
                {heads.map(h => <HeadCell key={h} />)}
              </Grid>
              <Filler />
              <HScroll>
                <HArrow>◂</HArrow>
                <HThumb />
                <HArrow $ml={298}>▸</HArrow>
              </HScroll>
            </Rebar>
          </Right>
        </Main>

        <Status>
          <StatusText $w={278} $s={14} $ls={.75}>= 59510 Y = 45406 Z = -3550</StatusText>
          <StatusText $w={93} $ls={.4}>层高：3.5</StatusText>
          <StatusText $w={149} $ls={.4}>标高：-3.55~-0.05</StatusText>
          <StatusText $w={114}>1(43)</StatusText>
          <StatusText $w={115}>隐藏：0</StatusText>
          <SBtn $w={28}><OrthoIcon /></SBtn>
          <SBtn $w={39} $on $mr={8}><RectSnapIcon /><SCaret>▼</SCaret></SBtn>
          <SBtn $w={26} $mr={8}><CrossIcon /></SBtn>
          <SBtn $w={39} $mr={5}><AngleIcon /><SCaret>▼</SCaret></SBtn>
          <SBtn $w={39}><PlusBar /><SCaret>▼</SCaret></SBtn>
          <SBtn $w={27}><ScreenIcon /></SBtn>
          <SBtn $w={27} $mr={7}><ArcIcon /></SBtn>
          <StatusText $w={400} $s={13}>按鼠标左键指定第一个角点，或拾取构件图元</StatusText>
        </Status>
      </Win>
      <RedNote>
        <NoteLine $ls={.8}>ZD1-上支墩：1000*1000</NoteLine>
        <NoteLine $ind={131}>角筋：4C25</NoteLine>
        <NoteLine $ind={3}>b边一侧中部筋：8C25</NoteLine>
        <NoteLine $ind={3}>h边一侧中部筋：8C25</NoteLine>
        <NoteLine $ind={2} $ls={.4}>箍筋：C12@100(8*8)</NoteLine>
      </RedNote>
      <Overlays />
    </Page>
  );
}
